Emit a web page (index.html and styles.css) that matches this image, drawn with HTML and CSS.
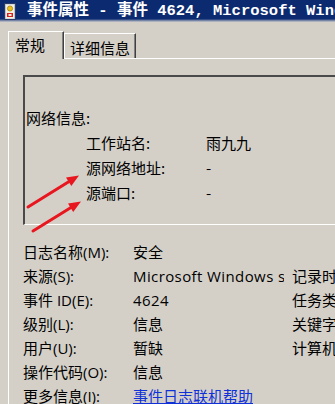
FILE: index.html
```html
<!DOCTYPE html>
<html lang="zh-CN">
<head>
<meta charset="utf-8">
<title>事件属性</title>
<link rel="stylesheet" href="styles.css">
</head>
<body>
<div class="window">
  <div class="titlebar">
    <svg class="app-icon" width="12" height="17" viewBox="0 0 12 17">
      <rect x="0.5" y="0.5" width="11" height="16" fill="#b8c4d8" stroke="#2a3a66"/>
      <rect x="2" y="1.5" width="8" height="14" fill="#f4f0e0"/>
      <circle cx="6" cy="5.5" r="2.6" fill="#e8c020" stroke="#8a6a00" stroke-width="0.6"/>
      <rect x="3" y="10" width="6" height="4" fill="#d42020"/>
      <rect x="4.5" y="11" width="3" height="2" fill="#f4f0e0"/>
    </svg>
    <span class="title-text">事件属性 - 事件 4624, Microsoft Windows security auditing.</span>
  </div>

  <div class="tabs">
    <div class="tab tab-active">常规</div>
    <div class="tab">详细信息</div>
  </div>

  <div class="panel">
    <div class="groupbox">
      <div class="gb-row gb-head">网络信息:</div>
      <div class="gb-row gb-item"><span class="gb-label">工作站名:</span><span>雨九九</span></div>
      <div class="gb-row gb-item"><span class="gb-label">源网络地址:</span><span>-</span></div>
      <div class="gb-row gb-item"><span class="gb-label">源端口:</span><span>-</span></div>
    </div>

    <div class="props">
      <div class="p-label">日志名称(M):</div><div class="p-value">安全</div><div class="p-extra"></div>
      <div class="p-label">来源(S):</div><div class="p-value p-latin">Microsoft Windows security auditing.</div><div class="p-extra">记录时间(D):</div>
      <div class="p-label">事件 ID(E):</div><div class="p-value p-latin">4624</div><div class="p-extra">任务类别(Y):</div>
      <div class="p-label">级别(L):</div><div class="p-value">信息</div><div class="p-extra">关键字(K):</div>
      <div class="p-label">用户(U):</div><div class="p-value">暂缺</div><div class="p-extra">计算机(R):</div>
      <div class="p-label">操作代码(O):</div><div class="p-value">信息</div><div class="p-extra"></div>
      <div class="p-label">更多信息(I):</div><div class="p-value"><a class="link" href="#">事件日志联机帮助</a></div><div class="p-extra"></div>
    </div>
  </div>

  <svg class="arrows" width="335" height="404" viewBox="0 0 335 404">
    <line x1="28" y1="207" x2="69.5" y2="181.3" stroke="#e8161e" stroke-width="3" stroke-linecap="round"/>
    <polygon points="79,175.5 71.3,186 66,177.6" fill="#e8161e"/>
    <line x1="33" y1="231" x2="71.4" y2="207.3" stroke="#e8161e" stroke-width="3" stroke-linecap="round"/>
    <polygon points="81,201.5 73.2,212 68,203.6" fill="#e8161e"/>
  </svg>
</div>
</body>
</html>
```

FILE: styles.css
```css
html, body {
  margin: 0;
  padding: 0;
}
body {
  width: 335px;
  height: 404px;
  overflow: hidden;
  background: #d4d0c8;
  font-family: "Open Sans", "Noto Sans CJK SC", sans-serif;
  font-size: 15px;
  color: #000;
}
.window {
  position: relative;
  width: 335px;
  height: 404px;
  overflow: hidden;
}
.titlebar {
  height: 22px;
  display: flex;
  align-items: center;
  gap: 11px;
  padding-left: 4px;
  background: linear-gradient(to bottom, #0c2a70 0, #0c2a70 19px, #5a6e98 20px, #c8c8cc 22px);
  white-space: nowrap;
  overflow: hidden;
}
.app-icon {
  flex: none;
  margin-top: 1px;
}
.title-text {
  font-family: "Liberation Mono", "Noto Sans CJK SC", monospace;
  font-weight: bold;
  font-size: 15.5px;
  line-height: 20px;
  color: #fff;
  margin-top: -1px;
}
.tabs {
  height: 36px;
  display: flex;
  align-items: flex-end;
  padding-left: 8px;
}
.tab {
  box-sizing: border-box;
  height: 25px;
  border-top: 1px solid #fff;
  border-left: 1px solid #fff;
  border-right: 1px solid #404040;
  box-shadow: inset -1px 0 0 #808080;
  padding: 0 6px 0 5px;
  line-height: 26px;
  font-family: "Noto Sans CJK SC", sans-serif;
  font-size: 15px;
  white-space: nowrap;
}
.tab-active {
  position: relative;
  z-index: 1;
  width: 56px;
  height: 28px;
  margin-bottom: -1px;
  background: #d4d0c8;
  padding-left: 6px;
  line-height: 26px;
}
.tab:not(.tab-active) {
  width: 72px;
  padding-left: 5px;
  line-height: 28px;
}
.panel {
  border-top: 1px solid #fff;
  border-left: 1px solid #fff;
  margin-left: 8px;
  padding: 16px 0 0 14px;
  height: 400px;
}
.groupbox {
  box-sizing: border-box;
  width: 340px;
  height: 150px;
  border-top: 2px solid #4a4a4a;
  border-left: 2px solid #4a4a4a;
  border-bottom: 1px solid #fff;
  padding: 28px 0 0 1px;
  font-family: "Noto Sans CJK SC", sans-serif;
}
.gb-row {
  height: 25px;
  line-height: 25px;
  white-space: nowrap;
}
.gb-item {
  display: flex;
  padding-left: 60px;
}
.gb-label {
  width: 120px;
  flex: none;
}
.props {
  margin-top: 15px;
  display: grid;
  grid-template-columns: 110px 151px 51px;
  grid-auto-rows: 24px;
  line-height: 24px;
  white-space: nowrap;
}
.p-label, .p-value, .p-extra {
  overflow: hidden;
}
.p-latin {
  letter-spacing: 0.4px;
}
.p-extra {
  padding-left: 8px;
}
.link {
  color: #1030d8;
  text-decoration: underline;
}
.arrows {
  position: absolute;
  left: 0;
  top: 0;
  pointer-events: none;
}
```
